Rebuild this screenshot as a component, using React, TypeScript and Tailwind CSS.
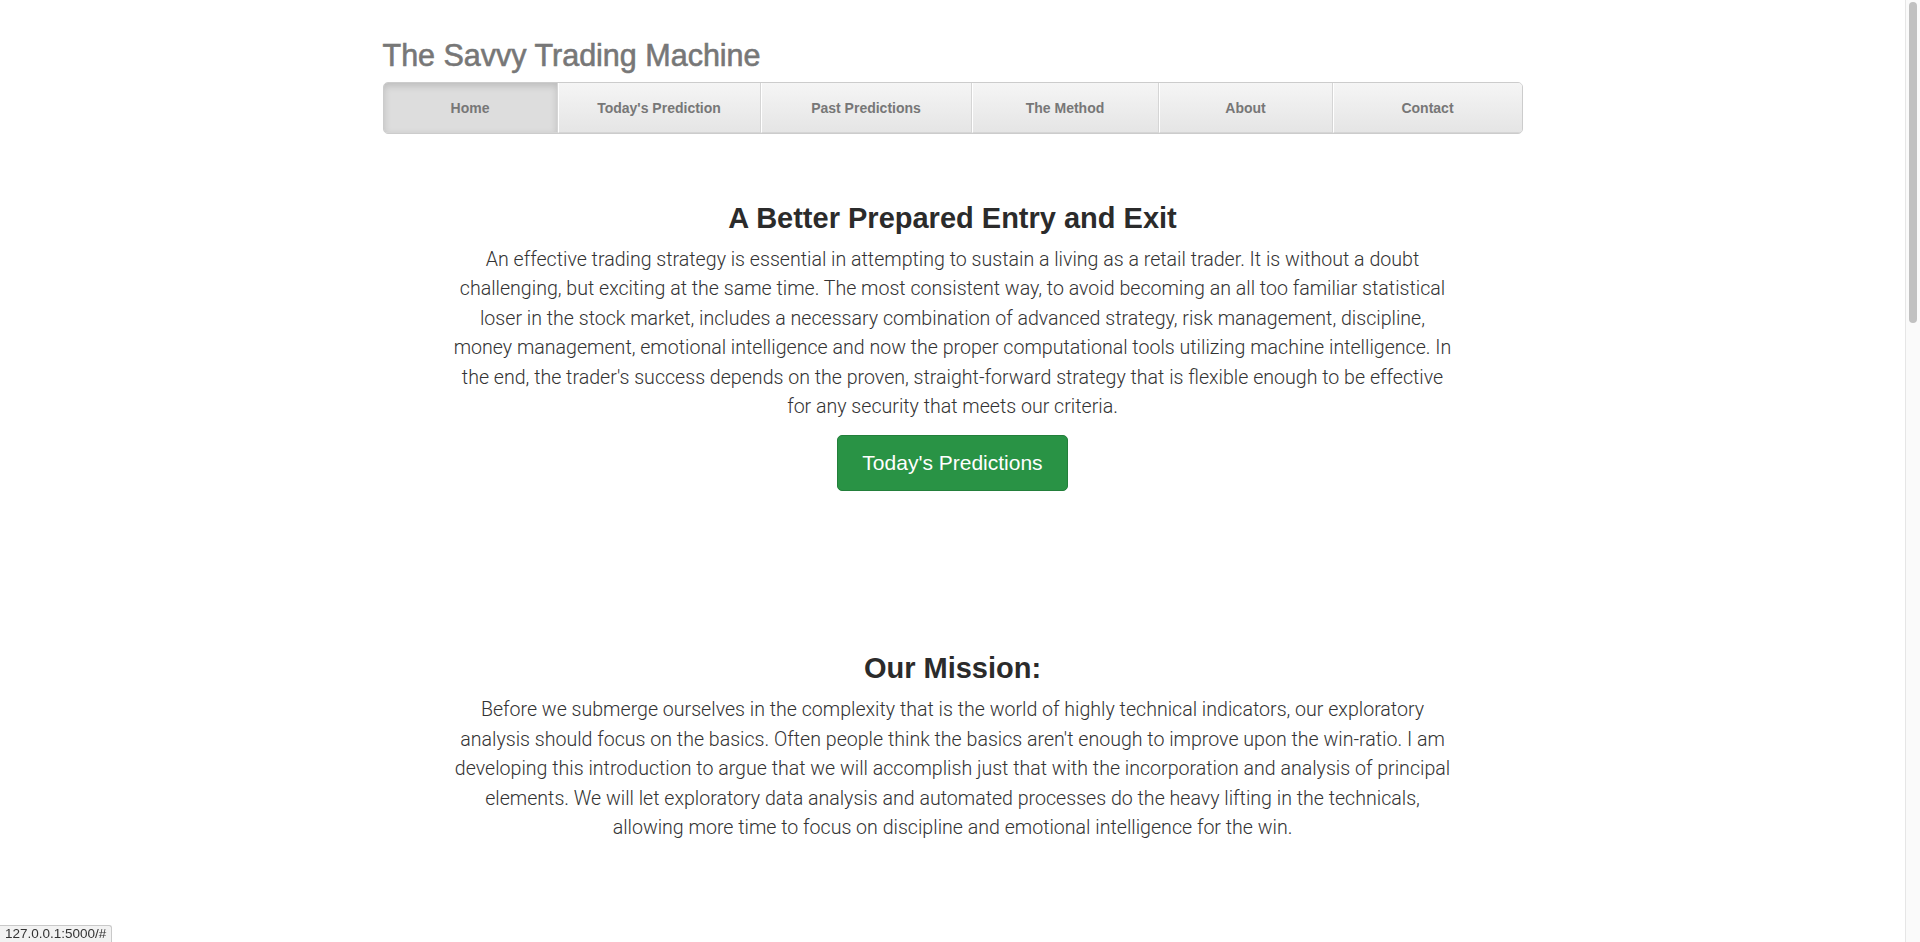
import React from "react";

const navItems = [
  { label: "Home", active: true },
  { label: "Today's Prediction" },
  { label: "Past Predictions" },
  { label: "The Method" },
  { label: "About" },
  { label: "Contact" },
];

// lines kept as in the original layout so the wrap matches
const intro = [
  "An effective trading strategy is essential in attempting to sustain a living as a retail trader. It is without a doubt",
  "challenging, but exciting at the same time. The most consistent way, to avoid becoming an all too familiar statistical",
  "loser in the stock market, includes a necessary combination of advanced strategy, risk management, discipline,",
  "money management, emotional intelligence and now the proper computational tools utilizing machine intelligence. In",
  "the end, the trader's success depends on the proven, straight-forward strategy that is flexible enough to be effective",
  "for any security that meets our criteria.",
];

const mission = [
  "Before we submerge ourselves in the complexity that is the world of highly technical indicators, our exploratory",
  "analysis should focus on the basics. Often people think the basics aren't enough to improve upon the win-ratio. I am",
  "developing this introduction to argue that we will accomplish just that with the incorporation and analysis of principal",
  "elements. We will let exploratory data analysis and automated processes do the heavy lifting in the technicals,",
  "allowing more time to focus on discipline and emotional intelligence for the win.",
];

function NavBar() {
  return (
    <ul className="grid grid-cols-[174px_203px_211px_187px_174px_1fr] h-[52px] rounded-[5px] border border-[#ccc] bg-[#eee] overflow-hidden">
      {navItems.map((item, i) => (
        <li key={item.label} className="flex">
          <a
            href="#"
            className={
              "flex-1 flex items-center justify-center pt-[2px] text-[14px] font-bold text-[#777] border-b border-[#d5d5d5] " +
              (i === 0 ? "" : "border-l border-l-white ") +
              (i === navItems.length - 1 ? "" : "border-r border-r-[#d5d5d5] ") +
              (item.active
                ? "bg-[#ddd] shadow-[inset_0_3px_7px_rgba(0,0,0,0.15)]"
                : "bg-gradient-to-b from-[#f5f5f5] to-[#e5e5e5]")
            }
          >
            {item.label}
          </a>
        </li>
      ))}
    </ul>
  );
}

function Section({ title, lines }: { title: string; lines: string[] }) {
  return (
    <div className="px-[40px] text-center">
      <h2 className="text-[29px] leading-[32px] font-bold text-[#2b2b2b]">{title}</h2>
      <p className="mt-[11px] text-[19.6px] leading-[29.4px] font-light text-[#333] font-['Roboto',sans-serif]">
        {lines.map((line, i) => (
          <React.Fragment key={i}>
            {line}
            {i < lines.length - 1 && <br />}
          </React.Fragment>
        ))}
      </p>
    </div>
  );
}

export default function App() {
  return (
    <div className="flex h-screen overflow-hidden bg-white font-['Liberation_Sans',Arial,sans-serif]">
      <main className="flex-1">
        <div className="w-[1170px] mx-auto px-[15px] pt-[39px]">
          <h3 className="text-[30.5px] leading-[33px] font-medium text-[#777] [-webkit-text-stroke:0.6px_#777]">
            The Savvy Trading Machine
          </h3>
          <div className="mt-[10px]">
            <NavBar />
          </div>

          <div className="mt-[68px]">
            <Section title="A Better Prepared Entry and Exit" lines={intro} />
            <div className="flex justify-center mt-[14px]">
              <a
                href="#"
                className="px-[24px] py-[13px] text-[21px] leading-[28px] text-white bg-[#299345] border border-[#237f3b] rounded-[5px]"
              >
                Today's Predictions
              </a>
            </div>
          </div>

          <div className="mt-[161px]">
            <Section title="Our Mission:" lines={mission} />
          </div>
        </div>
      </main>

      <aside className="w-[15px] h-full bg-[#fafafa] border-l border-[#e6e6e6] pt-[2px] pl-[3px]">
        <div className="w-[8px] h-[321px] rounded-full bg-[#c1c1c1]" />
      </aside>

      <div className="fixed left-0 bottom-0 h-[17px] px-[5px] flex items-center bg-[#f2f2f2] border-t border-r border-[#c9c9c9] rounded-tr-[3px] text-[13.5px] text-[#333]">
        127.0.0.1:5000/#
      </div>
    </div>
  );
}
